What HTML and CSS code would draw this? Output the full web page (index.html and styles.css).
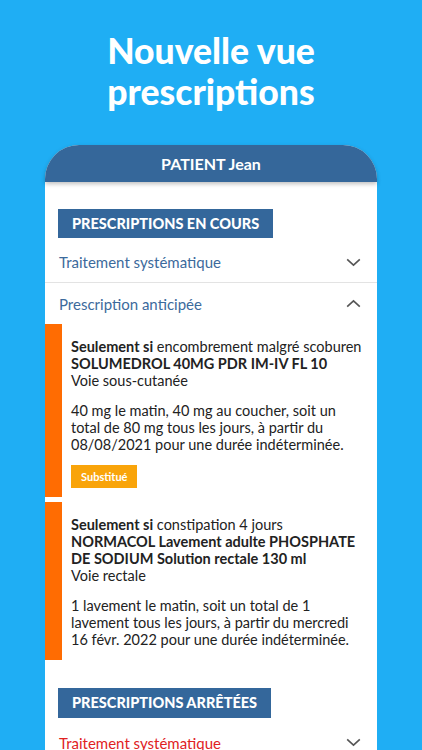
FILE: index.html
```html
<!DOCTYPE html>
<html lang="fr">
<head>
  <meta charset="UTF-8" />
  <meta name="viewport" content="width=device-width, initial-scale=1.0"/>
  <title>Nouvelle vue prescriptions</title>
  <link rel="stylesheet" href="styles.css">
</head>
<body>

  <h1 class="title">Nouvelle vue<br>prescriptions</h1>

  <div class="card">
    <header class="card-header">PATIENT Jean</header>

    <div class="card-body">
      <div class="section-label">Prescriptions en cours</div>

      <div class="group-row first">
        <span>Traitement systématique</span>
        <svg class="chevron" viewBox="0 0 16 10" width="15" height="9"><path d="M1 1.5 L8 8 L15 1.5" /></svg>
      </div>
      <div class="group-row open">
        <span>Prescription anticipée</span>
        <svg class="chevron" viewBox="0 0 16 10" width="15" height="9"><path d="M1 8.5 L8 2 L15 8.5" /></svg>
      </div>

      <div class="prescription has-badge">
        <p><strong>Seulement si</strong> encombrement malgré scoburen<br>
        <strong>SOLUMEDROL 40MG PDR IM-IV FL 10</strong><br>
        Voie sous-cutanée</p>
        <p>40 mg le matin, 40 mg au coucher, soit un total de 80 mg tous les jours, à partir du 08/08/2021 pour une durée indéterminée.</p>
        <span class="badge">Substitué</span>
      </div>

      <div class="prescription">
        <p><strong>Seulement si</strong> constipation 4 jours<br>
        <strong>NORMACOL Lavement adulte PHOSPHATE DE SODIUM Solution rectale 130 ml</strong><br>
        Voie rectale</p>
        <p>1 lavement le matin, soit un total de 1 lavement tous les jours, à partir du mercredi 16 févr. 2022 pour une durée indéterminée.</p>
      </div>

      <div class="section-label second">Prescriptions arrêtées</div>

      <div class="group-row first stopped">
        <span>Traitement systématique</span>
        <svg class="chevron" viewBox="0 0 16 10" width="15" height="9"><path d="M1 1.5 L8 8 L15 1.5" /></svg>
      </div>
    </div>
  </div>

</body>
</html>
```

FILE: styles.css
```css
* {
  box-sizing: border-box;
}

body {
  margin: 0;
  height: 750px;
  overflow: hidden;
  background: #1faef4;
  font-family: Lato, "Open Sans", sans-serif;
}

.title {
  margin: 0;
  padding-top: 30px;
  height: 145px;
  color: white;
  text-align: center;
  font-size: 35.5px;
  font-weight: 900;
  line-height: 41px;
}

.card {
  margin: 0 45px;
  background: #fff;
  border-radius: 34px 34px 0 0;
  min-height: 700px;
}

.card-header {
  height: 37px;
  line-height: 37px;
  background: #35679a;
  color: white;
  font-weight: bold;
  font-size: 16px;
  text-align: center;
  border-radius: 34px 34px 0 0;
  box-shadow: 0 2px 4px rgba(0,0,0,0.25);
  position: relative;
}

.card-body {
  padding-top: 27px;
}

.section-label {
  width: fit-content;
  margin-left: 13px;
  height: 29px;
  line-height: 29px;
  padding: 0 14px;
  background: #34679b;
  color: white;
  font-weight: 900;
  font-size: 14.5px;
  text-transform: uppercase;
}

.section-label.second {
  margin-top: 28px;
  height: 30px;
  line-height: 30px;
}

.group-row {
  display: flex;
  justify-content: space-between;
  align-items: center;
  height: 41px;
  padding: 0 16px 0 14px;
  color: #3c6a9c;
  font-size: 15px;
}

.group-row.first {
  height: 45px;
  padding-top: 4px;
  border-bottom: 1px solid #e3e3e3;
}

.group-row.stopped {
  color: #e0221f;
  border-bottom: none;
}

.chevron {
  fill: none;
  stroke: #555;
  stroke-width: 1.8;
}

.prescription {
  border-left: 17px solid #ff6c02;
  padding: 14px 10px 12px 9px;
  margin-bottom: 5px;
  color: #222;
  font-size: 14.5px;
  line-height: 17px;
}

.prescription.has-badge {
  padding-bottom: 9px;
}

.prescription p {
  margin: 0 0 13px;
}

.prescription p:last-of-type {
  margin-bottom: 0;
}

.badge {
  display: inline-block;
  margin-top: 12px;
  height: 23px;
  line-height: 23px;
  padding: 0 10px;
  background: #f9a40a;
  color: white;
  font-size: 11px;
  font-weight: bold;
  vertical-align: top;
}
```
